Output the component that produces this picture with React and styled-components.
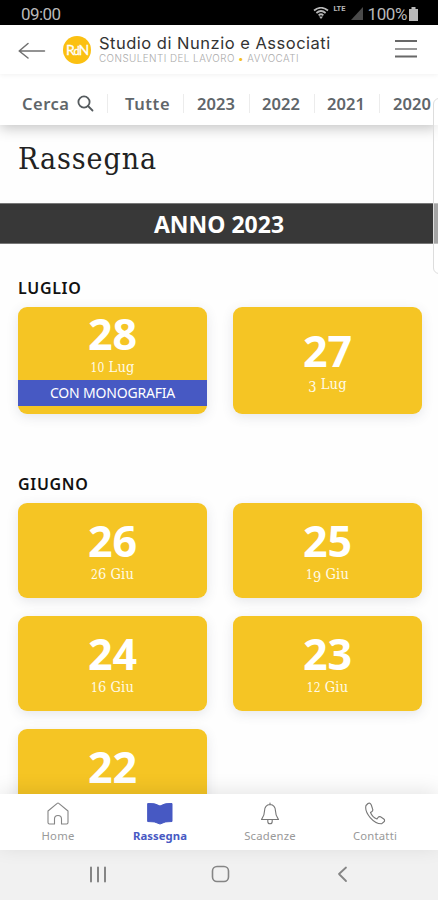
import React from "react";
import styled, { createGlobalStyle, css } from "styled-components";

const Global = createGlobalStyle`
  * { box-sizing: border-box; }
  body { margin: 0; background: #fff; overflow: hidden; }
`;

const sans = `"Noto Sans", "Open Sans", sans-serif`;
const serif = `"DejaVu Serif Condensed", "DejaVu Serif", serif`;

const Screen = styled.div`
  position: relative;
  width: 438px;
  height: 900px;
  display: flex;
  flex-direction: column;
  overflow: hidden;
  background: #fefefe;
  font-family: ${sans};
`;

const StatusBar = styled.div`
  flex: none;
  height: 25px;
  padding: 2px 20px 0 21px;
  display: flex;
  align-items: center;
  background: #000;
  color: #b9b9b9;
  font: 400 17px/24px Roboto, sans-serif;
`;
const Clock = styled.span`
  flex: 1;
  letter-spacing: -0.6px;
`;
const Lte = styled.span`
  align-self: flex-start;
  margin: 2px 6px 0 4px;
  font: 700 7.5px/10px Roboto, sans-serif;
`;
const Battery = styled.span`
  margin: 0 2px 0 4px;
  letter-spacing: -0.4px;
`;

const Header = styled.header`
  flex: none;
  height: 49px;
  display: flex;
  align-items: center;
  padding: 0 20px 0 18px;
  background: #fff;
  box-shadow: 0 1px 5px rgba(0, 0, 0, 0.06);
  z-index: 3;
`;
const Brand = styled.div`
  flex: 1;
  display: flex;
  align-items: center;
  gap: 8px;
  margin-left: 17px;
`;
const Monogram = styled.div`
  width: 28px;
  height: 28px;
  border-radius: 50%;
  background: #fbc011;
  color: #fff;
  text-align: center;
  font: 400 14px/28px Lato, sans-serif;
  letter-spacing: -1.2px;
  -webkit-text-stroke: 0.3px #fff;
  small { font-size: 11px; }
`;
const BrandText = styled.div`
  display: flex;
  flex-direction: column;
  white-space: nowrap;
  margin-top: -3px;
`;
const BrandName = styled.span`
  font: 400 16.5px/20px Inter, sans-serif;
  letter-spacing: 0.5px;
  color: #333;
`;
const BrandLine = styled.span`
  font: 300 9.8px/11px Inter, sans-serif;
  letter-spacing: 0.48px;
  color: #aaa;
  b { color: #f5c022; }
`;

const Filters = styled.nav`
  flex: none;
  height: 51px;
  display: flex;
  align-items: center;
  padding: 7px 0 0 22px;
  background: #fff;
  box-shadow: 0 3px 13px rgba(0, 0, 0, 0.24);
  z-index: 2;
`;
const Filter = styled.span`
  flex: none;
  display: flex;
  align-items: center;
  gap: 8px;
  width: ${(p) => p.$width}px;
  padding-left: ${(p) => p.$inset || 0}px;
  border-left: ${(p) => (p.$inset ? "1px solid #ececec" : "none")};
  font: 600 16.5px/19px ${sans};
  letter-spacing: ${(p) => p.$track || 0.1}px;
  color: #60666a;
`;

const Content = styled.main`
  flex: 1;
  min-height: 0;
  overflow: hidden;
`;
const Title = styled.h1`
  margin: 0;
  height: 78px;
  padding: 12px 18px 0;
  font: 400 30px/44px ${serif};
  letter-spacing: 0.95px;
  color: #222;
`;
const YearBand = styled.div`
  height: 41px;
  border-top: 1px solid #777;
  border-bottom: 1px solid #777;
  background: #383838;
  color: #fff;
  text-align: center;
  font: 700 23px/40px ${sans};
`;
const Month = styled.section`
  padding: ${(p) => p.$top}px 16px 0 18px;
`;
const MonthName = styled.h2`
  margin: 0;
  font: 600 16px/24px ${sans};
  letter-spacing: 0.68px;
  color: #111;
`;
const Cards = styled.div`
  display: grid;
  grid-template-columns: 189px 189px;
  gap: 18px 26px;
  padding-top: 7px;
`;
const CardBox = styled.article`
  height: ${(p) => (p.$tall ? 107 : 95)}px;
  display: flex;
  flex-direction: column;
  align-items: center;
  justify-content: ${(p) => (p.$tagged ? "flex-start" : "center")};
  padding: ${(p) => (p.$tagged ? "2px 0 0" : "0 0 3px")};
  border-radius: 9px;
  background: #f5c524;
  color: #fff;
  box-shadow: 0 3px 12px rgba(60, 70, 90, 0.13);
`;
const Issue = styled.strong`
  font: 700 43px/50px ${sans};
`;
const DateLine = styled.span`
  display: flex;
  align-items: baseline;
  height: 17px;
  font: 400 14.5px/17px ${serif};
  letter-spacing: 0.15px;
  color: #fffbe8;
`;
const Digit = styled.span`
  ${(p) => p.$kind === "small" && css`font-size: 12px;`}
  ${(p) => p.$kind === "low" && css`position: relative; top: 3px;`}
`;
const Word = styled.span`
  margin-left: 4px;
`;
const Tag = styled.span`
  align-self: stretch;
  height: 26px;
  margin-top: 4px;
  background: #4759c3;
  text-align: center;
  font: 400 14px/25px ${sans};
  letter-spacing: -0.2px;
`;

const TabBar = styled.nav`
  flex: none;
  height: 56px;
  display: grid;
  grid-template-columns: 110px 94px 126px 84px;
  padding-left: 3px;
  background: #fff;
  box-shadow: 0 -3px 20px rgba(0, 0, 0, 0.1);
  z-index: 2;
`;
const Tab = styled.span`
  display: flex;
  flex-direction: column;
  align-items: center;
  padding-top: 7px;
  font: ${(p) => (p.$active ? 700 : 400)} 11.3px/17px ${sans};
  letter-spacing: ${(p) => (p.$active ? 0.05 : 0.22)}px;
  color: ${(p) => (p.$active ? "#4759c3" : "#999")};
  svg { margin-bottom: 1px; }
`;
const SystemBar = styled.div`
  flex: none;
  height: 50px;
  display: flex;
  align-items: center;
  justify-content: space-between;
  padding: 0 86px 2px 86px;
  background: #f1f1f1;
`;
const EdgeHandle = styled.div`
  position: absolute;
  left: 433px;
  top: 98px;
  width: 12px;
  height: 176px;
  border: 1px solid #ddd;
  border-radius: 6px;
  background: rgba(255, 255, 255, 0.55);
  z-index: 5;
`;

const Stroke = ({ w, h, d, color = "#777", sw = 1.2, fill = "none", children }) => (
  <svg width={w} height={h} viewBox={`0 0 ${w} ${h}`} fill={fill} stroke={color} strokeWidth={sw} strokeLinecap="round" strokeLinejoin="round">
    {d && <path d={d} />}
    {children}
  </svg>
);

const digitKind = (c) => ("012".includes(c) ? "small" : "34579".includes(c) ? "low" : "full");

function Card({ issue, day, month, tag, tall }) {
  return (
    <CardBox $tall={tall} $tagged={!!tag}>
      <Issue>{issue}</Issue>
      <DateLine>
        {day && day.split("").map((c, i) => <Digit key={i} $kind={digitKind(c)}>{c}</Digit>)}
        {day && <Word>{month}</Word>}
      </DateLine>
      {tag && <Tag>{tag}</Tag>}
    </CardBox>
  );
}

const june = [["26", "26"], ["25", "19"], ["24", "16"], ["23", "12"], ["22"]];

export default function App() {
  return (
    <Screen>
      <Global />
      <StatusBar>
        <Clock>09:00</Clock>
        <svg width="16" height="14" viewBox="0 0 16 14" fill="none" stroke="#b9b9b9" strokeWidth="1.7">
          <path d="M1 3.500Q8-2 15 3.500M3.400 6Q8 2 12.600 6M5.600 8.300Q8 6.200 10.400 8.300" />
          <path d="M8 12L6 9.500h4z" fill="#b9b9b9" stroke="none" />
        </svg>
        <Lte>LTE</Lte>
        <svg width="12" height="13" viewBox="0 0 12 13"><path d="M12 0v13H0z" fill="#4a4a4a" /></svg>
        <Battery>100%</Battery>
        <svg width="9" height="14" viewBox="0 0 9 14"><path d="M2.5 0h4v2H9v12H0V2h2.5z" fill="#b9b9b9" /></svg>
      </StatusBar>

      <Header>
        <Stroke w={28} h={18} color="#707070" sw={1.5} d="M26.5 10H1.2M10 2.500L1.2 10L10 17" />
        <Brand>
          <Monogram>R<small>d</small>N</Monogram>
          <BrandText>
            <BrandName>Studio di Nunzio e Associati</BrandName>
            <BrandLine>CONSULENTI DEL LAVORO <b>•</b> AVVOCATI</BrandLine>
          </BrandText>
        </Brand>
        <svg width="24" height="20" viewBox="0 0 24 20" fill="none" strokeWidth="2">
          <path d="M1 1h22M1 16.500h22" stroke="#686868" />
          <path d="M1 9h22" stroke="#989898" />
        </svg>
      </Header>

      <Filters>
        <Filter $width={85} $track={0.5}>
          Cerca
          <Stroke w={17} h={17} color="#555b5e" sw={1.8} d="M11 11L15.5 15.5"><circle cx="7" cy="7" r="5.6" /></Stroke>
        </Filter>
        <Filter $width={76} $inset={17} $track={0.6}>Tutte</Filter>
        <Filter $width={66} $inset={13}>2023</Filter>
        <Filter $width={65} $inset={12}>2022</Filter>
        <Filter $width={65} $inset={12}>2021</Filter>
        <Filter $width={70} $inset={13}>2020</Filter>
      </Filters>

      <Content>
        <Title>Rassegna</Title>
        <YearBand>ANNO 2023</YearBand>
        <Month $top={32}>
          <MonthName>LUGLIO</MonthName>
          <Cards>
            <Card tall issue="28" day="10" month="Lug" tag="CON MONOGRAFIA" />
            <Card tall issue="27" day="3" month="Lug" />
          </Cards>
        </Month>
        <Month $top={58}>
          <MonthName>GIUGNO</MonthName>
          <Cards>
            {june.map(([issue, day]) => <Card key={issue} issue={issue} day={day} month="Giu" />)}
          </Cards>
        </Month>
      </Content>

      <TabBar>
        <Tab>
          <Stroke w={24} h={25} color="#858585" sw={1.1} d="M2 10L11.2 2.4Q12 1.600 12.8 2.4L22 10V21.5Q22 23 20.500 23H15.5V18Q15.5 14.5 12 14.5T8.500 18V23H3.500Q2 23 2 21.500Z" />
          Home
        </Tab>
        <Tab $active>
          <Stroke w={28} h={25} color="#4759c3" fill="#4759c3" sw={1} d="M2 2.500Q9 1.800 14 5Q19 1.800 26 2.500V20.500Q19 20 14 23Q9 20 2 20.500Z" />
          Rassegna
        </Tab>
        <Tab>
          <Stroke w={20} h={25} color="#777" sw={1.1} d="M10 2V3.500M10 3.500Q15.300 3.800 15.500 10C15.500 14.500 16.800 16 18.500 18.500H1.500C3.200 16 4.500 14.500 4.500 10Q4.700 3.800 10 3.500M7.800 18.800V20.500Q7.800 22.800 10 22.800T12.200 20.500V18.800" />
          Scadenze
        </Tab>
        <Tab>
          <Stroke w={22} h={25} color="#777" sw={1.1} d="M4 2.500L2 4.500C0 12 10 23 17.500 22.800L20.300 20.500Q21 19 19.800 18L16.500 15.800Q15 15.200 14 16.500L13 18C10 17 7.500 14 6.500 11.500L8 10.500Q9.200 9.500 8.600 8L7.300 4Q6 1.300 4 2.500Z" />
          Contatti
        </Tab>
      </TabBar>
      <SystemBar>
        <Stroke w={24} h={20} color="#858585" sw={2} d="M5 3.500V17.500M12 3.500V17.500M19 3.500V17.500" />
        <Stroke w={20} h={20} color="#858585" sw={1.600}><rect x="1.500" y="2.500" width="16" height="15" rx="4.500" /></Stroke>
        <Stroke w={20} h={20} color="#858585" sw={1.800} d="M14 3.500L7 10L14 17" />
      </SystemBar>
      <EdgeHandle />
    </Screen>
  );
}
